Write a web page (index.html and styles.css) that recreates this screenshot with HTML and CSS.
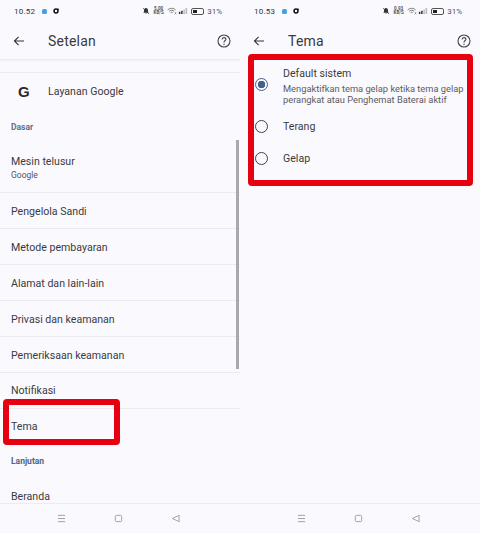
FILE: index.html
```html
<!DOCTYPE html>
<html>
<head>
  <title>Setelan dan Tema</title>
  <link rel="stylesheet" href="styles.css">
</head>
<body>

<div class="screen">
  <div class="status">
    <span class="time">10.52</span>
    <span class="app-dot"></span>
    <svg class="app-icon" viewBox="0 0 8 8"><circle cx="4" cy="4" r="2.6" fill="none" stroke="#111" stroke-width="2"/><path d="M5 1h3v2z" fill="#111"/></svg>
    <span class="status-right">
      <svg class="ic-bell" viewBox="0 0 12 12"><path d="M6 1.500c-2 0-3 1.500-3 3.500v2L2 8.500h8L9 7V5c0-2-1-3.500-3-3.500zM5 9.500h2L6 10.800z" fill="#333"/><path d="M1.500 1.500l9 9" stroke="#333" stroke-width="1"/></svg>
      <span class="speed">5.00<br>KB/S</span>
      <svg class="ic-wifi" viewBox="0 0 14 10"><path d="M1 3.500c3-3 8-3 11 0M3 5.500c2-2 5-2 7 0M5 7.500c1-1 2-1 3 0" fill="none" stroke="#444" stroke-width="1"/><path d="M11 7l2 2M13 7l-2 2" stroke="#444" stroke-width=".8"/></svg>
      <svg class="ic-signal" viewBox="0 0 11 8"><path d="M0 5h2v3H0zM3 3.500h2V8H3z" fill="#333"/><path d="M6 2h2v6H6zM9 0h2v8H9z" fill="#bbb"/></svg>
      <span class="battery"><span class="battery-fill"></span></span>
      <span class="percent">31%</span>
    </span>
  </div>

  <div class="header">
    <svg class="back" viewBox="0 0 14 12"><path d="M13 6H1.500M6.500 1L1.500 6l5 5" fill="none" stroke="#333" stroke-width="1.300"/></svg>
    <span class="title">Setelan</span>
    <svg class="help" viewBox="0 0 14 14"><circle cx="7" cy="7" r="6" fill="none" stroke="#444" stroke-width="1.100"/><path d="M5.100 5.500c0-2.500 3.800-2.500 3.800-.2 0 1.500-1.900 1.500-1.900 3.100" fill="none" stroke="#444" stroke-width="1.100"/><circle cx="7" cy="10.200" r=".7" fill="#444"/></svg>
  </div>

  <div class="list">
    <div class="top-gap"></div>
    <div class="google-row">
      <span class="g-logo">G</span>
      <span class="row-text">Layanan Google</span>
    </div>
    <div class="section">Dasar</div>
    <div class="row row-double">
      <div class="row-text">Mesin telusur</div>
      <div class="row-sub">Google</div>
    </div>
    <div class="row">Pengelola Sandi</div>
    <div class="row">Metode pembayaran</div>
    <div class="row">Alamat dan lain-lain</div>
    <div class="row">Privasi dan keamanan</div>
    <div class="row">Pemeriksaan keamanan</div>
    <div class="row row-high">Notifikasi</div>
    <div class="row row-high row-plain">Tema</div>
    <div class="section section-low">Lanjutan</div>
    <div class="row row-plain row-last">Beranda</div>
  </div>

  <div class="scrollbar"></div>
  <div class="mark mark-tema"></div>

  <div class="navbar">
    <svg class="nav-ic" viewBox="0 0 10 10"><path d="M1 1.500h8M1 5h8M1 8.500h8" stroke="#999" stroke-width="1"/></svg>
    <svg class="nav-ic" viewBox="0 0 10 10"><rect x="1.500" y="1.500" width="7" height="7" rx="1.500" fill="none" stroke="#999" stroke-width="1"/></svg>
    <svg class="nav-ic" viewBox="0 0 10 10"><path d="M9 1.500v7L1.500 5z" fill="none" stroke="#999" stroke-width="1"/></svg>
  </div>
</div>

<div class="screen">
  <div class="status">
    <span class="time">10.53</span>
    <span class="app-dot"></span>
    <svg class="app-icon" viewBox="0 0 8 8"><circle cx="4" cy="4" r="2.6" fill="none" stroke="#111" stroke-width="2"/><path d="M5 1h3v2z" fill="#111"/></svg>
    <span class="status-right">
      <svg class="ic-bell" viewBox="0 0 12 12"><path d="M6 1.500c-2 0-3 1.500-3 3.500v2L2 8.500h8L9 7V5c0-2-1-3.500-3-3.500zM5 9.500h2L6 10.800z" fill="#333"/><path d="M1.500 1.500l9 9" stroke="#333" stroke-width="1"/></svg>
      <span class="speed">0.93<br>KB/S</span>
      <svg class="ic-wifi" viewBox="0 0 14 10"><path d="M1 3.500c3-3 8-3 11 0M3 5.500c2-2 5-2 7 0M5 7.500c1-1 2-1 3 0" fill="none" stroke="#444" stroke-width="1"/><path d="M11 7l2 2M13 7l-2 2" stroke="#444" stroke-width=".8"/></svg>
      <svg class="ic-signal" viewBox="0 0 11 8"><path d="M0 5h2v3H0zM3 3.500h2V8H3z" fill="#333"/><path d="M6 2h2v6H6zM9 0h2v8H9z" fill="#bbb"/></svg>
      <span class="battery"><span class="battery-fill"></span></span>
      <span class="percent">31%</span>
    </span>
  </div>

  <div class="header header-flat">
    <svg class="back" viewBox="0 0 14 12"><path d="M13 6H1.500M6.500 1L1.500 6l5 5" fill="none" stroke="#333" stroke-width="1.300"/></svg>
    <span class="title">Tema</span>
    <svg class="help" viewBox="0 0 14 14"><circle cx="7" cy="7" r="6" fill="none" stroke="#444" stroke-width="1.100"/><path d="M5.100 5.500c0-2.500 3.800-2.500 3.800-.2 0 1.500-1.900 1.500-1.900 3.100" fill="none" stroke="#444" stroke-width="1.100"/><circle cx="7" cy="10.200" r=".7" fill="#444"/></svg>
  </div>

  <div class="options">
    <div class="option option-first">
      <span class="radio radio-on"></span>
      <div class="option-text">
        <div class="option-label">Default sistem</div>
        <div class="option-desc">Mengaktifkan tema gelap ketika tema gelap perangkat atau Penghemat Baterai aktif</div>
      </div>
    </div>
    <div class="option">
      <span class="radio"></span>
      <div class="option-label">Terang</div>
    </div>
    <div class="option">
      <span class="radio"></span>
      <div class="option-label">Gelap</div>
    </div>
  </div>

  <div class="mark mark-options"></div>

  <div class="navbar">
    <svg class="nav-ic" viewBox="0 0 10 10"><path d="M1 1.500h8M1 5h8M1 8.500h8" stroke="#999" stroke-width="1"/></svg>
    <svg class="nav-ic" viewBox="0 0 10 10"><rect x="1.500" y="1.500" width="7" height="7" rx="1.500" fill="none" stroke="#999" stroke-width="1"/></svg>
    <svg class="nav-ic" viewBox="0 0 10 10"><path d="M9 1.500v7L1.500 5z" fill="none" stroke="#999" stroke-width="1"/></svg>
  </div>
</div>

</body>
</html>
```

FILE: styles.css
```css
body {
  margin: 0;
  width: 480px;
  height: 533px;
  display: flex;
  overflow: hidden;
  font-family: Roboto, sans-serif;
  background: #faf9fe;
  color: #3a3a3e;
}

.screen {
  position: relative;
  width: 240px;
  height: 533px;
  display: flex;
  flex-direction: column;
  overflow: hidden;
}

.status {
  height: 22px;
  flex: none;
  display: flex;
  align-items: center;
  padding: 0 18px 0 14px;
  font-size: 8px;
  color: #333;
}

.time {
  font-size: 8px;
  letter-spacing: .2px;
}

.app-dot {
  width: 5px;
  height: 5px;
  margin-left: 7px;
  border-radius: 1.500px;
  background: #4d9fdc;
}

.app-icon {
  width: 6px;
  height: 6px;
  margin-left: 6px;
}

.status-right {
  margin-left: auto;
  display: flex;
  align-items: center;
}

.ic-bell {
  width: 8px;
  height: 8px;
  margin-right: 1px;
}

.speed {
  width: 11px;
  margin-left: 2px;
  font-size: 4.500px;
  line-height: 4.500px;
  font-weight: 700;
  text-align: center;
  color: #555;
}

.ic-wifi {
  width: 10px;
  height: 8px;
  margin-left: 3px;
}

.ic-signal {
  width: 10px;
  height: 6px;
  margin-left: 1px;
}

.battery {
  width: 13px;
  height: 7px;
  margin-left: 3px;
  padding: 1px;
  border: 1px solid #555;
  border-radius: 2px;
  box-sizing: border-box;
}

.battery-fill {
  display: block;
  width: 4px;
  height: 3px;
  background: #222;
}

.percent {
  margin-left: 3px;
  font-size: 8px;
  color: #555;
}

.header {
  height: 37px;
  flex: none;
  display: flex;
  align-items: center;
  padding: 0 9px 0 13px;
  border-bottom: 1px solid #ececef;
  box-shadow: 0 1px 2px rgba(0, 0, 0, 0.04);
}

.header-flat {
  border-bottom: none;
  box-shadow: none;
}

.back {
  width: 12px;
  height: 10px;
}

.title {
  margin-left: 23px;
  font-size: 14px;
  letter-spacing: .2px;
  color: #3a3a3e;
}

.help {
  width: 14px;
  height: 14px;
  margin-left: auto;
}

.list {
  flex: 1;
}

.top-gap {
  height: 12px;
  border-bottom: 1px solid #ececef;
}

.google-row {
  height: 36px;
  display: flex;
  align-items: center;
  padding-left: 18px;
}

.g-logo {
  width: 30px;
  font-family: "Liberation Sans", sans-serif;
  font-size: 15px;
  font-weight: 700;
  color: #2b2b2b;
}

.row-text {
  font-size: 10.600px;
}

.section {
  padding: 13px 0 0 11px;
  height: 21px;
  font-size: 8.500px;
  font-weight: 700;
  color: #5b7290;
}

.section-low {
  height: 21px;
  padding-top: 12px;
  color: #4f6488;
}

.row {
  height: 34px;
  display: flex;
  align-items: center;
  padding: 1px 0 0 11px;
  border-bottom: 1px solid #ececef;
  font-size: 10.600px;
}

.row-double {
  height: 49px;
  flex-direction: column;
  align-items: flex-start;
  justify-content: center;
  padding-top: 0;
}

.row-sub {
  margin-top: 2px;
  font-size: 8.500px;
  color: #555;
}

.row-high {
  height: 35px;
  padding-top: 0;
}

.row-plain {
  border-bottom: none;
}

.row-last {
  height: 32px;
  padding-top: 3px;
}

.scrollbar {
  position: absolute;
  left: 236px;
  top: 140px;
  width: 3px;
  height: 229px;
  background: #a9a8ae;
}

.mark {
  position: absolute;
  box-sizing: border-box;
  border: 6px solid #e7000f;
  border-radius: 4px;
}

.mark-tema {
  left: 3px;
  top: 399px;
  width: 117px;
  height: 46px;
}

.mark-options {
  left: 8px;
  top: 54px;
  width: 225px;
  height: 132px;
}

.option {
  display: flex;
  align-items: center;
  height: 32px;
  padding-left: 15px;
}

.option-first {
  height: 51px;
}

.option-text {
  padding-top: 2px;
}

.radio {
  width: 13px;
  height: 13px;
  flex: none;
  margin-right: 15px;
  border: 1.300px solid #444;
  border-radius: 50%;
  box-sizing: border-box;
}

.radio-on {
  border-color: #44608f;
  background: radial-gradient(circle, #44608f 0 3.500px, transparent 4px);
}

.option-label {
  font-size: 10.600px;
}

.option-desc {
  margin-top: 3px;
  width: 190px;
  font-size: 9.300px;
  line-height: 11px;
  color: #5c5c60;
}

.navbar {
  position: absolute;
  left: 0;
  right: 0;
  bottom: 0;
  height: 29px;
  display: flex;
  align-items: center;
  justify-content: center;
  gap: 48px;
  padding-right: 4px;
  background: #faf9fe;
  border-top: 1px solid #ececef;
}

.nav-ic {
  width: 9px;
  height: 9px;
}
```
